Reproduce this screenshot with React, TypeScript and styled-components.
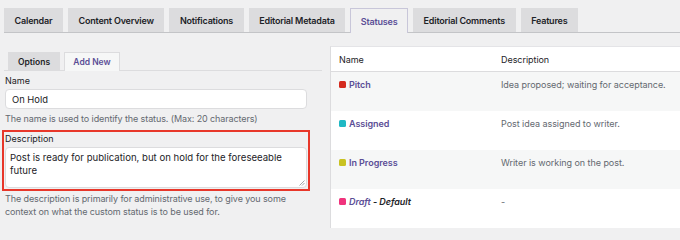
import React from "react";
import styled, { createGlobalStyle } from "styled-components";

const Global = createGlobalStyle`
  html, body {
    margin: 0;
    padding: 0;
    background: #f0f0f1;
    font-family: Inter, "Noto Sans", "Liberation Sans", sans-serif;
    color: #1d2327;
  }
  #root {
    width: 680px;
    height: 228px;
    overflow: hidden;
  }
`;

const Page = styled.div`
  padding: 8px 0 0 4px;
`;

const TabBar = styled.nav`
  display: flex;
  gap: 5px;
  height: 24px;
  border-bottom: 1px solid #c3c4c7;
`;

const Tab = styled.div<{ $active?: boolean }>`
  display: flex;
  align-items: center;
  padding: 0 9.6px;
  font-size: 9px;
  letter-spacing: -0.2px;
  font-weight: 600;
  color: ${(p) => (p.$active ? "#5b4e96" : "#1d2327")};
  background: ${(p) => (p.$active ? "#f0f0f1" : "#dcdcde")};
  border: 1px solid ${(p) => (p.$active ? "#c8c6d9" : "#dcdcde")};
  border-bottom: none;
  margin-bottom: ${(p) => (p.$active ? "-1px" : "0")};
  white-space: nowrap;
`;

const Body = styled.div`
  display: flex;
  gap: 8px;
  align-items: flex-start;
`;

const LeftCol = styled.div`
  width: 318px;
  flex: none;
  padding-top: 19px;
`;

const SubTabs = styled.div`
  display: flex;
  gap: 4px;
  padding-left: 4px;
  height: 18px;
  align-items: flex-end;
  border-bottom: 1px solid #dcdcde;
`;

const SubTab = styled.div<{ $active?: boolean }>`
  display: flex;
  align-items: center;
  justify-content: center;
  width: ${(p) => (p.$active ? "56px" : "52px")};
  height: ${(p) => (p.$active ? "19px" : "18px")};
  box-sizing: border-box;
  font-size: 8.5px;
  font-weight: 600;
  color: ${(p) => (p.$active ? "#5b4e96" : "#1d2327")};
  background: ${(p) => (p.$active ? "#f6f7f7" : "#dcdcde")};
  border: 1px solid #dcdcde;
  border-bottom: none;
  margin-bottom: ${(p) => (p.$active ? "-1px" : "0")};
`;

const Field = styled.div<{ $highlight?: boolean }>`
  margin: ${(p) => (p.$highlight ? "5px 12px 0 -2px" : "4px 15px 0 1px")};
  padding: ${(p) => (p.$highlight ? "1px 1px 1px 1px" : "0")};
  border: ${(p) => (p.$highlight ? "2px solid #e8372a" : "none")};
`;

const Label = styled.div`
  font-size: 9px;
  line-height: 12px;
  color: #1d2327;
  margin-bottom: 2px;
`;

const Input = styled.div`
  height: 20px;
  box-sizing: border-box;
  border: 1px solid #dcdcde;
  border-radius: 4px;
  background: #fff;
  padding: 0 6px;
  display: flex;
  align-items: center;
  font-size: 9.4px;
`;

const TextArea = styled.div`
  position: relative;
  height: 41px;
  box-sizing: border-box;
  border: 1px solid #dcdcde;
  border-radius: 4px;
  background: #fff;
  padding: 3px 4px;
  font-size: 9.6px;
  line-height: 13px;
`;

const Grip = styled.svg`
  position: absolute;
  right: 1px;
  bottom: 1px;
`;

const Help = styled.p<{ $gap: number }>`
  margin: ${(p) => p.$gap}px 15px 0 1px;
  font-size: 9px;
  letter-spacing: -0.1px;
  line-height: 13px;
  color: #646970;
`;

const Table = styled.div`
  flex: 1;
  margin-top: 13px;
  background: #fff;
  border-left: 1px solid #dcdcde;
  border-top: 1px solid #e4e4e7;
`;

const Row = styled.div<{ $head?: boolean; $stripe?: boolean }>`
  display: grid;
  grid-template-columns: 162px 1fr;
  height: ${(p) => (p.$head ? "25px" : "39px")};
  align-items: ${(p) => (p.$head ? "center" : "start")};
  padding: ${(p) => (p.$head ? "0 0 0 8px" : "7px 0 0 8px")};
  box-sizing: border-box;
  background: ${(p) => (p.$stripe ? "#f6f7f7" : "#fff")};
  border-bottom: ${(p) => (p.$head ? "1px solid #dcdcde" : "none")};
  font-size: 9px;
  letter-spacing: -0.05px;
  color: ${(p) => (p.$head ? "#1d2327" : "#646970")};
`;

const StatusName = styled.div`
  display: flex;
  align-items: center;
  gap: 3px;
  font-weight: 600;
  color: #5b4e96;
`;

const Dot = styled.span<{ $color: string }>`
  width: 7px;
  height: 7px;
  border-radius: 1.5px;
  background: ${(p) => p.$color};
  flex: none;
`;

const Def = styled.span`
  font-style: italic;
  color: #1d2327;
  font-weight: 600;
`;

const Italic = styled.span`
  font-style: italic;
`;

const tabs = [
  "Calendar",
  "Content Overview",
  "Notifications",
  "Editorial Metadata",
  "Statuses",
  "Editorial Comments",
  "Features",
];

const statuses = [
  { name: "Pitch", color: "#d42a1e", desc: "Idea proposed; waiting for acceptance." },
  { name: "Assigned", color: "#1fb8c4", desc: "Post idea assigned to writer." },
  { name: "In Progress", color: "#c9c221", desc: "Writer is working on the post." },
  { name: "Draft", color: "#f0337c", desc: "-", isDefault: true },
];

export default function App() {
  return (
    <>
      <Global />
      <Page>
        <TabBar>
          {tabs.map((t) => (
            <Tab key={t} $active={t === "Statuses"}>
              {t}
            </Tab>
          ))}
        </TabBar>
        <Body>
          <LeftCol>
            <SubTabs>
              <SubTab>Options</SubTab>
              <SubTab $active>Add New</SubTab>
            </SubTabs>
            <Field>
              <Label>Name</Label>
              <Input>On Hold</Input>
            </Field>
            <Help $gap={3}>The name is used to identify the status. (Max: 20 characters)</Help>
            <Field $highlight>
              <Label>Description</Label>
              <TextArea>
                Post is ready for publication, but on hold for the foreseeable future
                <Grip width="6" height="6" viewBox="0 0 6 6">
                  <path d="M5.5 0.5 L0.5 5.5 M5.5 3 L3 5.5" stroke="#8c8f94" strokeWidth="0.8" />
                </Grip>
              </TextArea>
            </Field>
            <Help $gap={1}>
              The description is primarily for administrative use, to give you some context on
              what the custom status is to be used for.
            </Help>
          </LeftCol>
          <Table>
            <Row $head>
              <div>Name</div>
              <div>Description</div>
            </Row>
            {statuses.map((s, i) => (
              <Row key={s.name} $stripe={i % 2 === 0}>
                <StatusName>
                  <Dot $color={s.color} />
                  {s.isDefault ? (
                    <span>
                      <Italic>{s.name}</Italic> <Def>- Default</Def>
                    </span>
                  ) : (
                    s.name
                  )}
                </StatusName>
                <div>{s.desc}</div>
              </Row>
            ))}
          </Table>
        </Body>
      </Page>
    </>
  );
}
